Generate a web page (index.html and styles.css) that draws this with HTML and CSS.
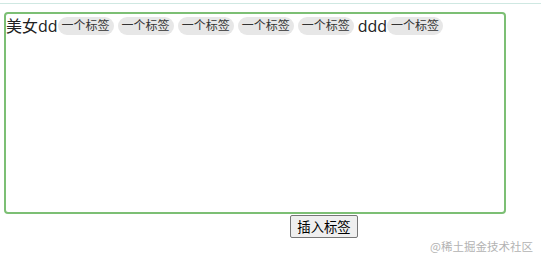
FILE: index.html
```html
<!DOCTYPE html>
<html lang="zh">
<head>
<meta charset="utf-8">
<link rel="stylesheet" href="styles.css">
</head>
<body>
<div class="topline"></div>
<div class="editor">美女dd<span class="tag">一个标签</span><span class="tag">一个标签</span><span class="tag">一个标签</span><span class="tag">一个标签</span><span class="tag">一个标签</span>ddd<span class="tag">一个标签</span></div>
<div class="actions"><button class="btn">插入标签</button></div>
<div class="watermark">@稀土掘金技术社区</div>
</body>
</html>
```
FILE: styles.css
```css
html, body {
  margin: 0;
  padding: 0;
  background: #ffffff;
}
body {
  width: 541px;
  height: 263px;
  position: relative;
  overflow: hidden;
  font-family: "Open Sans", "Noto Sans CJK SC", sans-serif;
}
.topline {
  height: 1px;
  margin-top: 3px;
  background: #cfe8e2;
}
.editor {
  box-sizing: border-box;
  margin: 8px 0 0 4px;
  width: 502px;
  height: 202px;
  border: 2px solid #7cbf74;
  border-radius: 4px;
  padding: 2px 0 0 0;
  font-size: 16px;
  line-height: 20px;
  color: #222;
}
.tag {
  display: inline-block;
  font-size: 12px;
  line-height: 18px;
  padding: 0 4px;
  margin: 0 4px 0 0;
  background: #e7e7e7;
  border-radius: 9px;
  color: #333;
  vertical-align: 2px;
}
.actions {
  padding-left: 290px;
  margin-top: 1px;
}
.btn {
  box-sizing: border-box;
  height: 23px;
  width: 68px;
  padding: 0;
  font-family: "Noto Sans CJK SC", sans-serif;
  font-size: 13.33px;
  line-height: 21px;
  color: #000;
  background: #efefef;
  border: 1px solid #767676;
  border-radius: 2px;
}
.watermark {
  position: absolute;
  left: 430px;
  top: 238px;
  font-family: "Noto Sans CJK SC", sans-serif;
  font-size: 11.5px;
  line-height: 16px;
  color: #b3b3b3;
}
```
